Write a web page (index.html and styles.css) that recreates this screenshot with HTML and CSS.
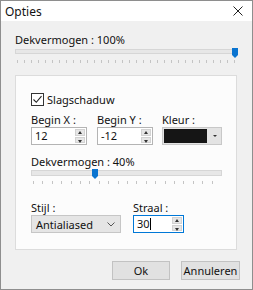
FILE: index.html
```html
<!DOCTYPE html>
<html>
<head>
    <title>Opties</title>
    <link rel="stylesheet" href="styles.css">
</head>
<body>
    <div class="dialog">
        <div class="titlebar">
            <span>Opties</span>
            <svg class="close" width="10" height="10" viewBox="0 0 10 10"><path d="M0.5 0.5 L9.5 9.5 M9.5 0.5 L0.5 9.5" stroke="#222" stroke-width="1"/></svg>
        </div>

        <div class="content">
            <div class="label">Dekvermogen : 100%</div>
            <div class="slider top-slider">
                <div class="track"></div>
                <svg class="thumb" style="left: 217px" width="6" height="10" viewBox="0 0 6 10"><path d="M0 0 H6 V7 L3 10 L0 7 Z" fill="#0a74d0"/></svg>
                <div class="ticks"></div>
            </div>

            <div class="panel">
                <label class="check">
                    <span class="box"><svg width="11" height="11" viewBox="0 0 11 11"><path d="M1.5 5.5 L4.3 8.3 L9.5 2.2" fill="none" stroke="#222" stroke-width="1.1"/></svg></span>
                    Slagschaduw
                </label>

                <div class="row">
                    <div class="field w-spin">
                        <div class="label">Begin X :</div>
                        <div class="spin">
                            <span class="val">12</span>
                            <div class="arrows"><span class="up"></span><span class="down"></span></div>
                        </div>
                    </div>
                    <div class="field w-spin">
                        <div class="label">Begin Y :</div>
                        <div class="spin">
                            <span class="val">-12</span>
                            <div class="arrows"><span class="up"></span><span class="down"></span></div>
                        </div>
                    </div>
                    <div class="field w-color">
                        <div class="label">Kleur :</div>
                        <div class="colorpick">
                            <span class="swatch"></span>
                            <span class="drop"></span>
                        </div>
                    </div>
                </div>

                <div class="label mid-label">Dekvermogen : 40%</div>
                <div class="slider low-slider">
                    <div class="track"></div>
                    <svg class="thumb" style="left: 61px" width="6" height="10" viewBox="0 0 6 10"><path d="M0 0 H6 V7 L3 10 L0 7 Z" fill="#0a74d0"/></svg>
                    <div class="ticks"></div>
                </div>

                <div class="row last-row">
                    <div class="field w-select">
                        <div class="label">Stijl :</div>
                        <div class="select">
                            <span>Antialiased</span>
                            <svg width="8" height="5" viewBox="0 0 8 5"><path d="M0.5 0.5 L4 4 L7.5 0.5" fill="none" stroke="#555" stroke-width="1"/></svg>
                        </div>
                    </div>
                    <div class="field w-radius">
                        <div class="label">Straal :</div>
                        <div class="spin focused">
                            <span class="val">30<i class="caret"></i></span>
                            <div class="arrows"><span class="up"></span><span class="down"></span></div>
                        </div>
                    </div>
                </div>
            </div>

            <div class="buttons">
                <button class="btn ok">Ok</button>
                <button class="btn">Annuleren</button>
            </div>
        </div>
    </div>
</body>
</html>
```

FILE: styles.css
```css
body {
    margin: 0;
    padding: 0;
    font-family: "Noto Sans", "Open Sans", sans-serif;
    font-size: 11px;
    color: #111;
    background: #fff;
}

.dialog {
    width: 253px;
    height: 290px;
    box-sizing: border-box;
    border: 1px solid #8e8e8e;
    background: #f0f0f0;
}

.titlebar {
    height: 20px;
    background: #fff;
    display: flex;
    align-items: center;
    justify-content: space-between;
    padding: 0 9px 0 4px;
    font-size: 12px;
}

.close {
    display: block;
}

.content {
    padding: 12px 14px 0 14px;
}

.label {
    height: 14px;
    line-height: 14px;
    white-space: nowrap;
}

/* trackbar */
.slider {
    position: relative;
    height: 18px;
}

.slider .track {
    height: 3px;
    margin-top: 2px;
    border: 1px solid #d6d6d6;
    background: #e7e7e7;
}

.slider .thumb {
    position: absolute;
    top: -1px;
}

.slider .ticks {
    height: 3px;
    margin-top: 6px;
    margin-left: 2px;
    margin-right: 1px;
    background: repeating-linear-gradient(to right, #c4c4c4 0, #c4c4c4 1px, transparent 1px, transparent 7px);
}

.top-slider {
    width: 222px;
}

.low-slider {
    width: 191px;
    height: 16px;
}

.low-slider .track {
    height: 4px;
    margin-top: 1px;
}

.low-slider .ticks {
    margin-top: 5px;
    background: repeating-linear-gradient(to right, #c4c4c4 0, #c4c4c4 1px, transparent 1px, transparent 9.4px);
}

/* group panel */
.panel {
    margin-top: 8px;
    width: 222px;
    box-sizing: border-box;
    border: 1px solid #dcdcdc;
    background: #fcfcfc;
    padding: 17px 10px 16px 15px;
}

.check {
    display: flex;
    align-items: center;
    gap: 3px;
    height: 13px;
}

.check .box {
    width: 11px;
    height: 11px;
    border: 1px solid #333;
    background: #fff;
}

.check .box svg {
    display: block;
}

.row {
    display: flex;
    margin-top: 7px;
}

.field {
    display: flex;
    flex-direction: column;
}

.w-spin {
    width: 56px;
    margin-right: 10px;
}

.w-color {
    width: 60px;
    margin-left: -1px;
}

.spin {
    height: 18px;
    box-sizing: border-box;
    border: 1px solid #b4b4b4;
    background: #fff;
    display: flex;
    justify-content: space-between;
}

.spin .val {
    padding-left: 3px;
    line-height: 16px;
    display: flex;
    align-items: center;
}

.spin .arrows {
    width: 10px;
    margin: 1px 1px 1px 0;
    display: flex;
    flex-direction: column;
    gap: 1px;
}

.spin .arrows span {
    flex: 1;
    background: #e6e6e6;
    border: 1px solid #d2d2d2;
    position: relative;
}

.spin .up::after,
.spin .down::after {
    content: "";
    position: absolute;
    left: 2px;
    border-left: 2px solid transparent;
    border-right: 2px solid transparent;
}

.spin .up::after {
    top: 1px;
    border-bottom: 3px solid #333;
}

.spin .down::after {
    top: 2px;
    border-top: 3px solid #333;
}

.spin.focused {
    border-color: #0078d7;
}

.caret {
    display: inline-block;
    width: 1px;
    height: 12px;
    background: #000;
}

.colorpick {
    height: 18px;
    box-sizing: border-box;
    border: 1px solid #c8c8c8;
    background: #e3e3e3;
    display: flex;
    align-items: center;
    padding: 1px;
}

.colorpick .swatch {
    width: 43px;
    height: 14px;
    background: #151515;
}

.colorpick .drop {
    flex: 1;
    height: 14px;
    position: relative;
}

.colorpick .drop::after {
    content: "";
    position: absolute;
    left: 6px;
    top: 6px;
    border-left: 2px solid transparent;
    border-right: 2px solid transparent;
    border-top: 2px solid #333;
}

.mid-label {
    margin-top: 10px;
}

.last-row {
    margin-top: 15px;
}

.w-select {
    width: 90px;
    margin-right: 12px;
}

.w-radius {
    width: 51px;
}

.select {
    height: 18px;
    box-sizing: border-box;
    border: 1px solid #c6c6c6;
    background: #e5e5e5;
    display: flex;
    align-items: center;
    justify-content: space-between;
    padding: 0 5px 0 4px;
}

/* buttons */
.buttons {
    display: flex;
    justify-content: flex-end;
    gap: 11px;
    margin-top: 11px;
    margin-right: -2px;
}

.btn {
    width: 58px;
    height: 19px;
    padding: 0;
    font-family: inherit;
    font-size: 11px;
    color: #111;
    background: #e1e1e1;
    border: 1px solid #c2c2c2;
}

.btn + .btn {
    width: 59px;
}
```
